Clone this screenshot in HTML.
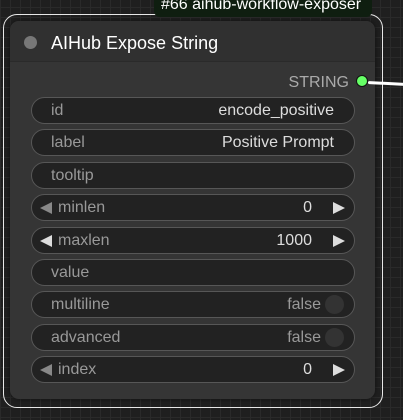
<!DOCTYPE html><html><head><style>
*{margin:0;padding:0;box-sizing:border-box}
body{width:403px;height:420px;overflow:hidden;background:#1f1f1f;
background-image:linear-gradient(#2a2a2a 1px,transparent 1px),linear-gradient(90deg,#2a2a2a 1px,transparent 1px);
background-size:10px 10px;background-position:0 7px;font-family:"Liberation Sans",sans-serif;position:relative}
.outline{position:absolute;left:3px;top:14px;width:380px;height:394px;border:1.5px solid #e8e8e8;border-radius:14px}
.node{position:absolute;left:10px;top:21px;width:365px;height:378px;background:#353535;border-radius:9px;box-shadow:0 0 4px #111}
.title{height:41px;background:#303030;border-bottom:1px solid #2a2a2a;border-radius:9px 9px 0 0;position:relative}
.title .dot{position:absolute;left:14px;top:15px;width:13px;height:13px;border-radius:50%;background:#777}
.title span{position:absolute;left:41px;top:12px;color:#fff;font-size:18px}
.badge{position:absolute;left:154px;top:-4px;width:218px;height:21px;background:#0f1e10;border-radius:0 0 6px 6px;color:#fff;font-size:16px;padding-left:7px;line-height:18px;z-index:2}
.out{position:absolute;right:26px;top:53px;color:#aaa;font-size:16px}
.sock{position:absolute;left:356px;top:75px;width:12px;height:12px;border-radius:50%;background:#6f6;border:1.5px solid #111;z-index:3}
.wire{position:absolute;left:368px;top:81px;width:40px;height:3px;background:#fff;border-radius:2px;transform:rotate(3deg);transform-origin:left}
.w{position:absolute;left:31px;width:324px;height:27px;background:#222;border:1px solid #575757;border-radius:14px;color:#999;font-size:16px;line-height:26px}
.w .l{position:absolute;left:19px}
.w .r{position:absolute;right:20px;color:#ddd}
.w.n .l{left:26px}
.w.n .r{right:42px}
.al,.ar{position:absolute;top:7px;width:0;height:0;border-top:6px solid transparent;border-bottom:6px solid transparent}
.al{left:8px;border-right:12px solid #888}
.ar{right:9px;border-left:12px solid #ddd}
.al.b{border-right-color:#ddd}
.t{position:absolute;right:10px;top:3px;width:19px;height:19px;border-radius:50%;background:#333}
.w.tg .r{right:33px;color:#999}
</style></head><body>
<div class="outline"></div>
<div class="badge">#66 aihub-workflow-exposer</div>
<div class="node"><div class="title"><div class="dot"></div><span>AIHub Expose String</span></div>
<div class="out">STRING</div></div>
<div class="sock"></div><div class="wire"></div>
<div class="w" style="top:97px"><span class="l">id</span><span class="r">encode_positive</span></div>
<div class="w" style="top:129px"><span class="l">label</span><span class="r">Positive Prompt</span></div>
<div class="w" style="top:162px"><span class="l">tooltip</span></div>
<div class="w n" style="top:194px"><div class="al"></div><span class="l">minlen</span><span class="r">0</span><div class="ar"></div></div>
<div class="w n" style="top:227px"><div class="al b"></div><span class="l">maxlen</span><span class="r">1000</span><div class="ar"></div></div>
<div class="w" style="top:259px"><span class="l">value</span></div>
<div class="w tg" style="top:291px"><span class="l">multiline</span><span class="r">false</span><div class="t"></div></div>
<div class="w tg" style="top:324px"><span class="l">advanced</span><span class="r">false</span><div class="t"></div></div>
<div class="w n" style="top:356px"><div class="al"></div><span class="l">index</span><span class="r">0</span><div class="ar"></div></div>
</body></html>
